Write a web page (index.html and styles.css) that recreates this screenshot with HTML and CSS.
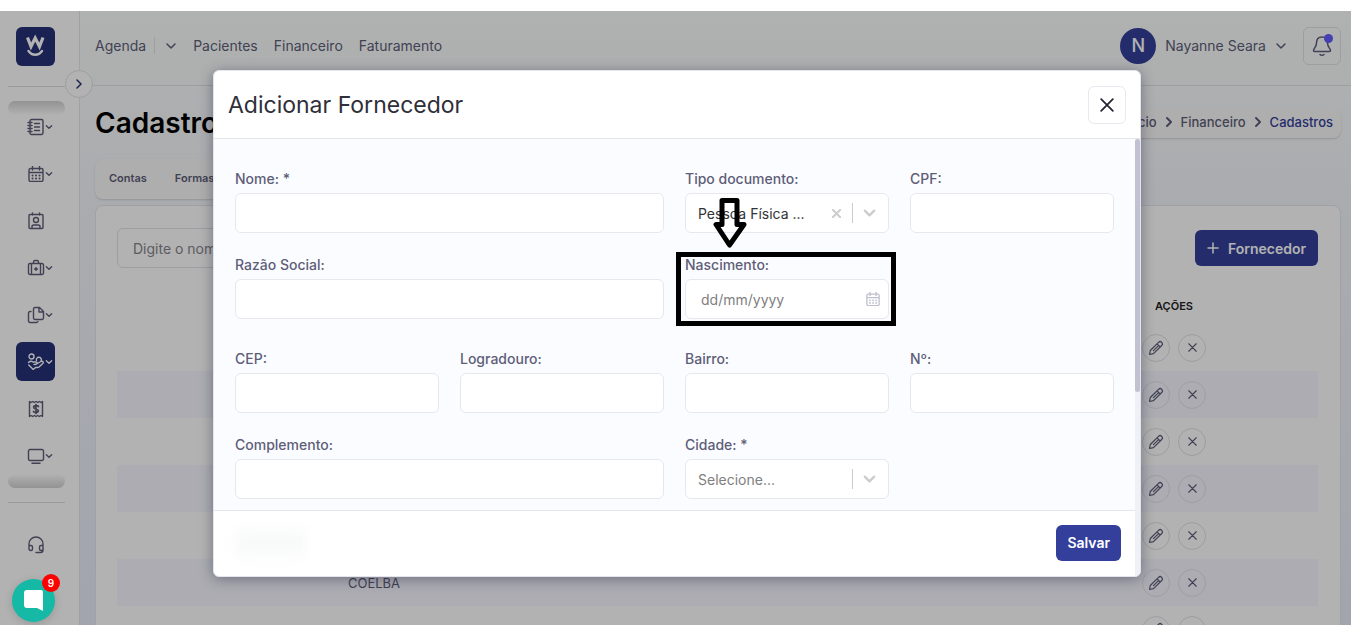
FILE: index.html
```html
<!DOCTYPE html>
<html lang="pt-BR">
<head>
    <meta charset="utf-8">
    <title>Cadastros</title>
    <link rel="stylesheet" href="styles.css">
</head>
<body>
    <svg class="sprite" aria-hidden="true">
        <symbol id="chevron-down" viewBox="0 0 12 12"><path d="M2 4l4 4 4-4"/></symbol>
        <symbol id="chevron-right" viewBox="0 0 12 12"><path d="M4 2l4 4-4 4"/></symbol>
        <symbol id="close" viewBox="0 0 12 12"><path d="M1 1l10 10M11 1L1 11"/></symbol>
        <symbol id="pencil" viewBox="0 0 16 16"><path d="M1.500 14.500l.800-4L10.500 2.300a2 2 0 0 1 3.200 3.200L5.500 13.700zM9 3.800l3.200 3.200M10 6.200L5.500 10.700"/></symbol>
        <symbol id="calendar" viewBox="0 0 16 16"><path d="M2.500 2.500h11a1.500 1.500 0 0 1 1.500 1.500v10a1.500 1.500 0 0 1-1.500 1.500h-11A1.500 1.500 0 0 1 1 14V4a1.500 1.500 0 0 1 1.500-1.500zM1 6.500h14M4.500 0v4M11.500 0v4"/><path d="M4.500 9.500h.1M8 9.500h.1M11.500 9.500h.1M4.500 12.500h.1M8 12.500h.1M11.500 12.500h.1" stroke-width="2"/></symbol>
    </svg>

    <div class="app">
        <aside class="sidebar">
            <a class="logo" href="#" aria-label="Início">
                <svg viewBox="0 0 39 39"><path d="M11.500 10.500l3.500 9 4.200-8.500 4.300 8.500 3.500-9" stroke-width="3.200" stroke-linecap="butt" stroke-linejoin="miter"/><path d="M12.500 24c3.500 5 10 5 13.500 0" stroke-width="2.400"/></svg>
            </a>
            <hr>
            <nav class="menu">
                <a href="#" aria-label="Agenda"><svg class="icon" viewBox="0 0 16 16"><path d="M3.500.500h10A1.500 1.500 0 0 1 15 2v12a1.500 1.500 0 0 1-1.500 1.500h-10A1.500 1.500 0 0 1 2 14V2A1.500 1.500 0 0 1 3.500.500zM0 3.500h4M0 6.500h4M0 9.500h4M0 12.500h4M6.500 4.500h5M6.500 8h5M6.500 11.500h5"/></svg><svg class="caret"><use href="#chevron-down"/></svg></a>
                <a href="#" aria-label="Calendário"><svg class="icon"><use href="#calendar"/></svg><svg class="caret"><use href="#chevron-down"/></svg></a>
                <a href="#" aria-label="Pacientes"><svg class="icon" viewBox="0 0 16 16"><path d="M2 1.500h12a1 1 0 0 1 1 1v12a1 1 0 0 1-1 1H2a1 1 0 0 1-1-1v-12a1 1 0 0 1 1-1zM4.500 0v2M11.500 0v2M4 15v-1.500c0-1 1-1.500 2-1.500h4c1 0 2 .500 2 1.500V15"/><circle cx="8" cy="7" r="2.500"/></svg></a>
                <a href="#" aria-label="Clínica"><svg class="icon" viewBox="0 0 16 16"><path d="M2 3.500h12A1.500 1.500 0 0 1 15.500 5v8a1.500 1.500 0 0 1-1.500 1.500H2A1.500 1.500 0 0 1 .500 13V5A1.500 1.500 0 0 1 2 3.500zM3.500 3.500v11M12.500 3.500v11M5.500 3.500V2A1.500 1.500 0 0 1 7 .500h2A1.500 1.500 0 0 1 10.500 2v1.500M8 7.500v3M6.500 9h3"/></svg><svg class="caret"><use href="#chevron-down"/></svg></a>
                <a href="#" aria-label="Documentos"><svg class="icon" viewBox="0 0 16 16"><path d="M7 .500h4.500l4 4V11A1.500 1.500 0 0 1 14 12.500H7A1.500 1.500 0 0 1 5.500 11V2A1.500 1.500 0 0 1 7 .500zM11 .500V5h4.500M3 4.500H2A1.500 1.500 0 0 0 .500 6v8A1.500 1.500 0 0 0 2 15.500h6.500a2 2 0 0 0 1.500-1"/></svg><svg class="caret"><use href="#chevron-down"/></svg></a>
                <a href="#" class="active" aria-label="Financeiro"><svg class="icon" viewBox="0 0 16 16"><circle cx="3.500" cy="2.500" r="2.500"/><path d="M8.500 6.500a2.500 2.500 0 1 1 4.500.500M.500 8.500c1.500-1.500 3-1.500 4.500-.500l3 0c1.500 0 1.500 2 0 2.200L6 10.500M8.500 10l4.500-2.500c1.500-.800 3 .500 2 1.700L11 13c-1 .800-2 .500-3.500.500L5.500 15.200M.800 11l4.200 4.200"/></svg><svg class="caret"><use href="#chevron-down"/></svg></a>
                <a href="#" aria-label="Faturamento"><svg class="icon" viewBox="0 0 16 16"><path d="M1.500.500L3 1.500 4.700.500l1.600 1L8 .500l1.700 1 1.600-1 1.700 1 1.500-1v15l-1.500-1-1.700 1-1.600-1-1.700 1-1.700-1-1.600 1-1.700-1-1.500 1z"/><path d="M10.500 5.500C9.500 4 5.500 4.500 5.700 6.300 6 8.500 10 7.500 10.300 9.700 10.400 11.500 6.500 12 5.500 10.500M8 3.500v9" stroke-width="1.700"/></svg></a>
                <a href="#" aria-label="Monitor"><svg class="icon" viewBox="0 0 16 16"><path d="M2 1.500h12A1.500 1.500 0 0 1 15.500 3v8a1.500 1.500 0 0 1-1.500 1.500H2A1.500 1.500 0 0 1 .500 11V3A1.500 1.500 0 0 1 2 1.500zM4 15.300h8"/></svg><svg class="caret"><use href="#chevron-down"/></svg></a>
            </nav>
            <hr>
            <a class="support" href="#" aria-label="Suporte"><svg class="icon" viewBox="0 0 16 16"><path d="M1 10V7a7 7 0 0 1 14 0v6a2.500 2.500 0 0 1-2.500 2.500H8M1 8.500h2A1.500 1.500 0 0 1 4.500 10v2A1.500 1.500 0 0 1 3 13.500h-.500A1.500 1.500 0 0 1 1 12zM15 8.500h-2a1.500 1.500 0 0 0-1.500 1.500v2a1.500 1.500 0 0 0 1.500 1.500h.500A1.500 1.500 0 0 0 15 12z"/></svg></a>
            <button class="toggle" type="button" aria-label="Expandir menu"><svg><use href="#chevron-right"/></svg></button>
        </aside>

        <div class="page">
            <header class="topbar">
                <nav class="topnav">
                    <a class="split" href="#">Agenda</a>
                    <button type="button" aria-label="Mais opções"><svg><use href="#chevron-down"/></svg></button>
                    <a href="#">Pacientes</a>
                    <a href="#">Financeiro</a>
                    <a href="#">Faturamento</a>
                </nav>
                <button class="user" type="button"><span class="avatar">N</span>Nayanne Seara<svg><use href="#chevron-down"/></svg></button>
                <button class="bell" type="button" aria-label="Notificações">
                    <svg viewBox="0 0 20 22"><path d="M10 2C6.500 2 4.500 4.500 4.500 8c0 4-3 5.500-3 7.500 0 .500.500 1 1 1h15c.500 0 1-.500 1-1 0-2-3-3.500-3-7.500 0-3.500-2-6-5.500-6zM8 19.500c1 1 3 1 4 0"/></svg>
                    <span class="dot"></span>
                </button>
            </header>

            <main>
                <div class="title-row">
                    <h1>Cadastros</h1>
                    <nav class="breadcrumb">
                        <a href="#">Início</a><svg><use href="#chevron-right"/></svg>
                        <a href="#">Financeiro</a><svg><use href="#chevron-right"/></svg>
                        <a href="#" class="current">Cadastros</a>
                    </nav>
                </div>
                <nav class="tabs">
                    <a href="#">Contas</a>
                    <a href="#">Formas</a>
                </nav>
                <section class="card">
                    <div class="card-head">
                        <input type="text" class="search" placeholder="Digite o nome" aria-label="Pesquisar">
                        <button class="btn add" type="button"><svg viewBox="0 0 12 12"><path d="M6 1v10M1 6h10"/></svg>Fornecedor</button>
                    </div>
                    <table>
                        <thead>
                            <tr><th class="col-name"></th><th></th><th class="col-actions">AÇÕES</th></tr>
                        </thead>
                        <tbody id="rows"></tbody>
                    </table>
                </section>
            </main>
        </div>

        <div class="overlay">
            <div class="modal" role="dialog" aria-labelledby="modalTitle">
                <div class="modal-header">
                    <h2 id="modalTitle">Adicionar Fornecedor</h2>
                    <button class="close" type="button" aria-label="Fechar"><svg><use href="#close"/></svg></button>
                </div>
                <div class="modal-main">
                    <form class="modal-content">
                        <div class="fields">
                            <div class="field wide"><label for="nome">Nome: *</label><input type="text" id="nome"></div>
                            <div class="field">
                                <label for="tipo">Tipo documento:</label>
                                <div class="select-box">
                                    <select id="tipo"><option>Pessoa Física ...</option></select>
                                    <button type="button" class="clear" aria-label="Limpar"><svg><use href="#close"/></svg></button>
                                    <svg class="arrow"><use href="#chevron-down"/></svg>
                                </div>
                            </div>
                            <div class="field"><label for="cpf">CPF:</label><input type="text" id="cpf"></div>

                            <div class="field wide"><label for="razao">Razão Social:</label><input type="text" id="razao"></div>
                            <div class="field date">
                                <label for="nascimento">Nascimento:</label>
                                <div class="select-box">
                                    <input type="text" id="nascimento" placeholder="dd/mm/yyyy">
                                    <svg class="cal"><use href="#calendar"/></svg>
                                </div>
                                <svg class="pointer" viewBox="0 0 34 51"><path d="M9 2.500h15v24h7L16.500 47 3 26.500h6z"/></svg>
                            </div>

                            <div class="field first"><label for="cep">CEP:</label><input type="text" id="cep"></div>
                            <div class="field"><label for="logradouro">Logradouro:</label><input type="text" id="logradouro"></div>
                            <div class="field"><label for="bairro">Bairro:</label><input type="text" id="bairro"></div>
                            <div class="field"><label for="numero">Nº:</label><input type="text" id="numero"></div>

                            <div class="field wide"><label for="complemento">Complemento:</label><input type="text" id="complemento"></div>
                            <div class="field">
                                <label for="cidade">Cidade: *</label>
                                <div class="select-box">
                                    <select id="cidade" class="empty"><option>Selecione...</option></select>
                                    <svg class="arrow"><use href="#chevron-down"/></svg>
                                </div>
                            </div>
                        </div>
                        <div class="modal-footer">
                            <span class="smudge"></span>
                            <button class="btn" type="button">Salvar</button>
                        </div>
                    </form>
                    <div class="track"><div class="thumb"></div></div>
                </div>
            </div>
        </div>

        <button class="chat" type="button" aria-label="Chat">
            <svg viewBox="0 0 20 22"><path d="M3 0h14a2 2 0 0 1 2 2v19l-6-3H3a3 3 0 0 1-3-3V3a3 3 0 0 1 3-3z"/></svg>
            <span class="count">9</span>
        </button>
    </div>

    <script>
        const names = ["", "", "", "", "", "COELBA", "COMAG"];
        const rows = document.getElementById('rows');

        names.forEach(name => {
            rows.innerHTML += `<tr>
                <td>${name}</td>
                <td></td>
                <td>
                    <div class="actions">
                        <button type="button" aria-label="Editar"><svg class="edit"><use href="#pencil"/></svg></button>
                        <button type="button" aria-label="Excluir"><svg><use href="#close"/></svg></button>
                    </div>
                </td>
            </tr>`;
        });
    </script>
</body>
</html>
```
FILE: styles.css
```css
* {
    box-sizing: border-box;
}

body {
    margin: 0;
    padding-top: 11px;
    height: 100vh;
    overflow: hidden;
    background: #fff;
    font-family: Inter, "Liberation Sans", sans-serif;
    font-size: 14px;
    color: #5e5e78;
}

a {
    color: inherit;
    text-decoration: none;
}

button, input, select {
    font: inherit;
    color: inherit;
}

button {
    padding: 0;
    border: none;
    background: none;
    cursor: pointer;
}

svg {
    display: block;
    width: 12px;
    height: 12px;
    flex: none;
    fill: none;
    stroke: currentColor;
    stroke-linecap: round;
    stroke-linejoin: round;
    stroke-width: 1.5;
}

.sprite {
    position: absolute;
    width: 0;
    height: 0;
}

.app {
    position: relative;
    display: flex;
    height: 100%;
    overflow: hidden;
    background: linear-gradient(#fcfffe, #f4f7fb 28%, #e8ecfa);
}

/* sidebar */
.sidebar {
    position: relative;
    width: 80px;
    flex: none;
    padding: 16px 14px 0 8px;
    background: #fff;
    border-right: 1px solid #e6e6ec;
}

.sidebar hr {
    margin: 0;
    border: none;
    border-top: 1px solid #dcdce2;
}

.logo {
    display: block;
    width: 39px;
    margin: 0 0 20px 8px;
    border-radius: 6px;
    background: #263077;
    color: #fff;
}

.logo svg {
    width: 39px;
    height: 39px;
}

.menu {
    position: relative;
    display: flex;
    flex-direction: column;
    gap: 8px;
    margin: 14px 0;
    padding: 6px 0 13px 8px;
}

.menu::before, .menu::after {
    content: "";
    position: absolute;
    left: 0;
    right: 0;
    top: 0;
    height: 14px;
    border-radius: 7px;
    background: linear-gradient(#d2d2d2, #fff);
}

.menu::after {
    top: auto;
    bottom: 0;
    background: linear-gradient(#fff, #d2d2d2);
}

.menu a, .support {
    display: flex;
    align-items: center;
    gap: 1px;
    width: 39px;
    height: 39px;
    padding-left: 12px;
    border-radius: 6px;
}

.menu .active {
    background: #263077;
    color: #fff;
}

.support {
    margin: 22px 0 0 8px;
}

.icon {
    width: 16px;
    height: 16px;
    stroke-width: 1.4;
    overflow: visible;
}

.caret {
    width: 8px;
    height: 8px;
    stroke-width: 2;
}

.toggle {
    position: absolute;
    right: -14px;
    top: 59px;
    z-index: 1;
    display: flex;
    align-items: center;
    justify-content: center;
    width: 28px;
    height: 28px;
    border: 1px solid #e2e2e8;
    border-radius: 50%;
    background: #fff;
    color: #263077;
}

/* page */
.page {
    flex: 1;
    min-width: 0;
}

.topbar {
    display: flex;
    align-items: center;
    height: 75px;
    padding: 0 10px 5px 15px;
    border-bottom: 1px solid #e0e2e4;
}

.topnav {
    display: flex;
    align-items: center;
    gap: 16px;
    flex: 1;
}

.topnav button {
    margin-left: -6px;
}

.split {
    padding-right: 8px;
    border-right: 1px solid #e0e2e4;
}

.user {
    display: flex;
    align-items: center;
    gap: 9px;
    margin-right: 16px;
}

.avatar {
    display: flex;
    align-items: center;
    justify-content: center;
    width: 36px;
    height: 36px;
    border-radius: 50%;
    background: #343f9b;
    color: #fff;
    font-size: 18px;
    font-weight: 500;
}

.bell {
    position: relative;
    display: flex;
    align-items: center;
    justify-content: center;
    width: 38px;
    height: 38px;
    border: 1px solid #e2e2e8;
    border-radius: 6px;
}

.bell svg {
    width: 20px;
    height: 22px;
}

.dot {
    position: absolute;
    top: 6px;
    right: 7px;
    width: 9px;
    height: 9px;
    border-radius: 50%;
    background: #635bff;
}

main {
    padding: 20px 10px 0 15px;
}

.title-row {
    display: flex;
    align-items: center;
    justify-content: space-between;
}

h1 {
    margin: 0;
    font-size: 28px;
    line-height: 34px;
    font-weight: 600;
    color: #000;
}

.breadcrumb {
    display: flex;
    align-items: center;
    gap: 6px;
    height: 30px;
    padding: 0 8px 3px;
    border-radius: 8px;
    background: #fafafa;
    box-shadow: 0 1px 2px rgba(0, 0, 0, 0.15);
    font-size: 13px;
    font-weight: 500;
}

.breadcrumb svg {
    stroke-width: 2;
}

.current {
    color: #343f9b;
}

.tabs {
    display: flex;
    align-items: center;
    gap: 28px;
    width: 60%;
    height: 40px;
    margin: 19px 0 6px;
    padding: 0 14px 3px;
    border-radius: 8px;
    background: #fafafa;
    box-shadow: 0 1px 2px rgba(0, 0, 0, 0.15);
    font-size: 11px;
    font-weight: 600;
}

.card {
    padding: 22px 22px 0 21px;
    border: 1px solid #e6e6ec;
    border-radius: 8px;
    background: #fff;
}

.card-head {
    display: flex;
    align-items: center;
    justify-content: space-between;
}

.search {
    width: 320px;
    height: 40px;
    padding: 0 15px;
    border: 1px solid #e2e2e8;
    border-radius: 6px;
    background: none;
}

.search::placeholder {
    color: #85858c;
}

.btn {
    height: 36px;
    padding: 0 11px;
    border-radius: 6px;
    background: #343f9b;
    color: #fff;
    font-weight: 600;
}

.add {
    display: flex;
    align-items: center;
    gap: 9px;
    padding: 0 12px;
}

table {
    width: 100%;
    margin-top: 20px;
    border-collapse: collapse;
    table-layout: fixed;
    text-align: center;
}

th {
    height: 36px;
    padding: 0;
    font-size: 11px;
    font-weight: 600;
    color: #222;
}

.col-name {
    width: 514px;
}

.col-actions {
    width: 288px;
}

td {
    height: 47px;
    padding: 0;
    font-size: 13px;
}

tbody tr:nth-child(even) {
    background: #f7f7ff;
}

.actions {
    display: flex;
    justify-content: center;
    gap: 8px;
}

.actions button {
    display: flex;
    align-items: center;
    justify-content: center;
    width: 28px;
    height: 28px;
    border: 1px solid #e2e2e8;
    border-radius: 50%;
}

.actions svg {
    width: 9px;
    height: 9px;
}

.actions .edit {
    width: 16px;
    height: 16px;
    stroke-width: 1.2;
}

/* modal */
.overlay {
    position: absolute;
    inset: 0;
    z-index: 2;
    display: flex;
    padding: 59px 210px 48px 213px;
    background: rgba(0, 0, 0, 0.3);
}

.modal {
    flex: 1;
    min-width: 0;
    display: flex;
    flex-direction: column;
    overflow: hidden;
    border: 1px solid #e4e4ee;
    border-radius: 6px;
    background: #fff;
    box-shadow: 0 2px 14px rgba(20, 20, 50, 0.4);
}

.modal-header {
    display: flex;
    align-items: center;
    justify-content: space-between;
    height: 68px;
    flex: none;
    padding: 0 14px;
    border-bottom: 1px solid #e4e6ec;
}

h2 {
    margin: 0;
    font-size: 23px;
    font-weight: 400;
    color: #2f2f3a;
}

.close {
    display: flex;
    align-items: center;
    justify-content: center;
    width: 38px;
    height: 38px;
    border: 1px solid #e8e8ee;
    border-radius: 6px;
    color: #222230;
}

.close svg {
    width: 14px;
    height: 14px;
}

.modal-main {
    flex: 1;
    min-height: 0;
    display: flex;
}

.modal-content {
    flex: 1;
    min-width: 0;
    display: flex;
    flex-direction: column;
}

.fields {
    flex: 1;
    min-height: 0;
    overflow: hidden;
    display: grid;
    grid-template-columns: repeat(4, 1fr);
    align-content: start;
    gap: 22px 21px;
    padding: 30px 21px 0;
    background: #fbfcff;
}

.field {
    min-width: 0;
}

.wide {
    grid-column: span 2;
}

.first {
    grid-column-start: 1;
}

.field label {
    display: block;
    margin-bottom: 4px;
    line-height: 20px;
    font-weight: 500;
}

.field > input, .select-box {
    display: flex;
    align-items: center;
    width: 100%;
    height: 40px;
    border: 1px solid #e6e8ee;
    border-radius: 6px;
    background: #fff;
}

.select-box select, .select-box input {
    flex: 1;
    min-width: 0;
    height: 100%;
    padding: 0 0 0 12px;
    border: none;
    background: none;
    appearance: none;
    color: #333;
}

.select-box input {
    padding-left: 15px;
}

.select-box .empty, .select-box input::placeholder {
    color: #808080;
}

.select-box .clear {
    width: 32px;
    color: #ccc;
}

.clear svg {
    width: 9px;
    height: 9px;
    margin: 0 auto;
    stroke-width: 2.5;
}

.select-box .arrow {
    width: 36px;
    height: 20px;
    padding: 3px 2px 3px 0;
    border-left: 1px solid #ccc;
    color: #ccc;
    stroke-width: 2;
}

.cal {
    width: 14px;
    height: 14px;
    margin-right: 8px;
    color: #c0c0d0;
}

.date {
    position: relative;
    margin-bottom: 8px;
}

.date::after {
    content: "";
    position: absolute;
    inset: -3px -7px -7px -9px;
    border: 5px solid #000;
    pointer-events: none;
}

.pointer {
    position: absolute;
    left: 28px;
    top: -57px;
    width: 34px;
    height: 51px;
    color: #000;
    stroke-width: 5;
}

.modal-footer {
    display: flex;
    align-items: center;
    justify-content: space-between;
    height: 66px;
    flex: none;
    padding: 0 14px 2px 21px;
    border-top: 1px solid #e4e6ec;
}

.smudge {
    width: 72px;
    height: 24px;
    background: #f7f9f8;
    filter: blur(8px);
}

.track {
    width: 5px;
    background: #f0f1f6;
}

.thumb {
    height: 58%;
    border-radius: 3px;
    background: #c1c1d2;
}

/* chat */
.chat {
    position: absolute;
    left: 12px;
    bottom: 3px;
    z-index: 3;
    display: flex;
    align-items: center;
    justify-content: center;
    width: 43px;
    height: 43px;
    border-radius: 50%;
    background: #16b8a6;
    box-shadow: 0 2px 8px rgba(0, 0, 0, 0.15);
}

.chat svg {
    width: 20px;
    height: 22px;
    fill: #fff;
    stroke: none;
}

.count {
    position: absolute;
    top: -5px;
    right: -5px;
    width: 18px;
    height: 18px;
    border-radius: 50%;
    background: #f00;
    color: #fff;
    font-size: 10px;
    line-height: 18px;
    font-weight: 600;
}
```
